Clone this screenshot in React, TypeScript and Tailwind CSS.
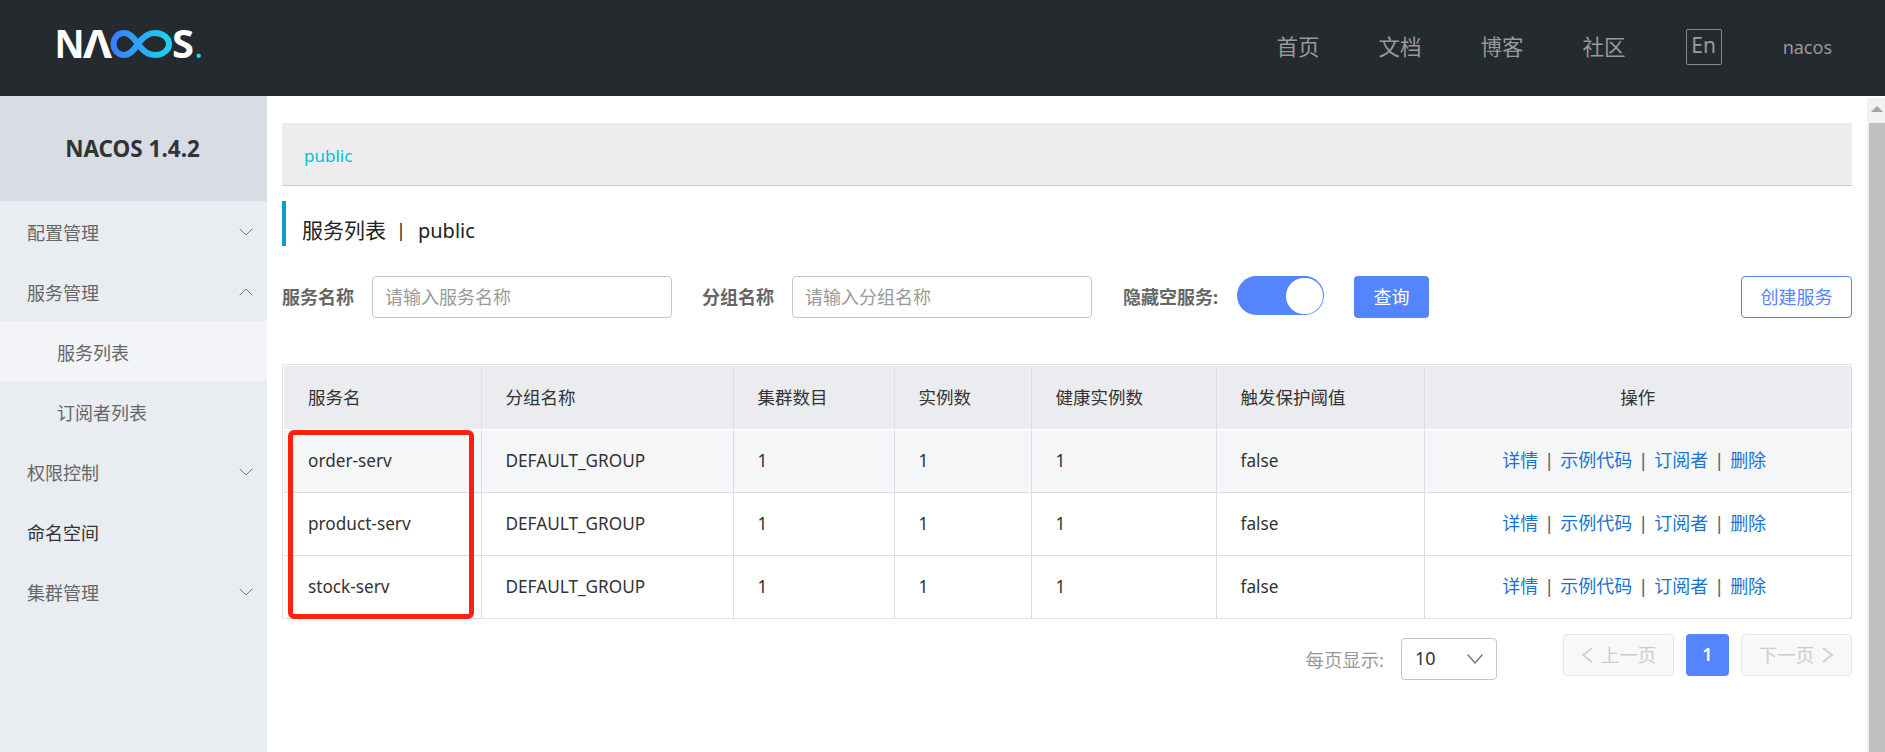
import { ChevronDown, ChevronUp } from "lucide-react";

const menu = [
  { label: "配置管理", icon: "down" },
  { label: "服务管理", icon: "up" },
  { label: "服务列表", sub: true, active: true },
  { label: "订阅者列表", sub: true },
  { label: "权限控制", icon: "down" },
  { label: "命名空间", dark: true },
  { label: "集群管理", icon: "down" },
];

const rows = [
  { name: "order-serv", hover: true },
  { name: "product-serv" },
  { name: "stock-serv" },
];

const headers = ["服务名", "分组名称", "集群数目", "实例数", "健康实例数", "触发保护阈值"];

function Logo() {
  return (
    <svg viewBox="50 10 160 68" width="160" height="68" className="mb-2 ml-[50px] flex-none">
      <defs>
        <linearGradient id="loop" gradientUnits="userSpaceOnUse" x1="111" y1="44" x2="172" y2="44">
          <stop offset="0" stopColor="#3a7cff" />
          <stop offset="1" stopColor="#1ad8f0" />
        </linearGradient>
      </defs>
      <g fill="#fff" fontFamily="'Noto Sans', sans-serif" fontWeight="700" fontSize="39">
        <text x="54.5" y="57.8" textLength="30" lengthAdjust="spacingAndGlyphs">N</text>
        <text x="83" y="57.8" textLength="29" lengthAdjust="spacingAndGlyphs">Λ</text>
        <text x="172" y="57.8" textLength="22" lengthAdjust="spacingAndGlyphs">S</text>
      </g>
      <path
        d="M138 44C134 38 130 33 124 33C118 33 113.5 38 113.5 44C113.5 50 118 55 124 55C130 55 134 50 138 44C142 38 147 33 155 33C163 33 169 38 169 44C169 50 163 55 155 55C147 55 142 50 138 44Z"
        fill="none"
        stroke="url(#loop)"
        strokeWidth="6"
      />
      <circle cx="198.7" cy="55.7" r="2.2" fill="#1ad8f0" />
    </svg>
  );
}

function PageArrow({ dir }: { dir: "left" | "right" }) {
  return (
    <svg viewBox="0 0 12 16" className="h-4 w-3 flex-none" fill="none" stroke="#cfcfcf" strokeWidth="1.8">
      <polyline points={dir === "left" ? "11,1 2,8 11,15" : "1,1 10,8 1,15"} />
    </svg>
  );
}

export default function App() {
  return (
    <div className="flex h-[752px] flex-col overflow-hidden bg-white font-['Noto_Sans','Noto_Sans_CJK_SC',sans-serif] text-[18px]">
      <header className="flex h-24 flex-none items-center bg-[#252a2f] text-[#999]">
        <Logo />
        <nav className="ml-auto flex items-center gap-[59px] pb-[2px] text-[21.5px]">
          <a>首页</a>
          <a>文档</a>
          <a>博客</a>
          <a>社区</a>
        </nav>
        <span className="mb-[2px] ml-[60px] flex h-[36px] w-[36px] items-center justify-center rounded-[2px] border border-[#8a8a8a] pb-[3px] text-[21px]">
          En
        </span>
        <span className="mr-[53px] ml-[61px] pb-0.5 text-[18px]">nacos</span>
      </header>

      <div className="flex min-h-0 flex-1">
        <aside className="w-[267px] flex-none bg-[#e9ecf1]">
          <div className="flex h-[105px] items-center justify-center bg-[#d8dce4] pr-0.5 text-[22.5px] font-bold text-[#333]">
            NACOS 1.4.2
          </div>
          {menu.map((item) => (
            <div
              key={item.label}
              className={`flex h-[60px] items-center pt-1 pr-[9px] text-[18px] ${item.sub ? "pl-[57px]" : "pl-[27px]"} ${
                item.active ? "bg-[#f2f4f8]" : ""
              } ${item.dark ? "text-[#333]" : "text-[#666]"}`}
            >
              <span>{item.label}</span>
              {item.icon === "down" && <ChevronDown size={24} strokeWidth={1} className="mb-0.5 ml-auto text-[#777]" />}
              {item.icon === "up" && <ChevronUp size={24} strokeWidth={1} className="mb-0.5 ml-auto text-[#777]" />}
            </div>
          ))}
        </aside>

        <main className="min-w-0 flex-1 px-[15px] pt-[27px]">
          <div className="flex h-[63px] items-center border-b border-[#ccc] bg-[#ededed] pt-1 pl-[22px] text-[17px] text-[#00c1de]">
            public
          </div>

          <h1 className="mt-[15px] flex h-[45px] items-center border-l-4 border-[#0f9bcb] pt-[14px] pl-4 text-[20px] text-[#222]">
            <span className="text-[21px]">服务列表</span>
            <span className="mr-[12px] ml-[10px] text-[18px]">|</span>public
          </h1>

          <div className="mt-[30px] flex h-[42px] items-center text-[18px]">
            <label className="w-[72px] font-bold text-[#666]">服务名称</label>
            <input
              placeholder="请输入服务名称"
              className="ml-[18px] h-[42px] w-[300px] rounded border border-[#c4c6cf] px-3 text-[18px] outline-none placeholder:text-[#999]"
            />
            <label className="ml-[30px] w-[72px] font-bold text-[#666]">分组名称</label>
            <input
              placeholder="请输入分组名称"
              className="ml-[18px] h-[42px] w-[300px] rounded border border-[#c4c6cf] px-3 text-[18px] outline-none placeholder:text-[#999]"
            />
            <label className="ml-[31px] w-[96px] font-bold whitespace-nowrap text-[#666]">隐藏空服务:</label>
            <div className="mb-[3px] ml-[18px] flex h-[39px] w-[87px] items-center justify-end rounded-full bg-[#5584ff] pr-px">
              <div className="h-[36px] w-[37px] rounded-full bg-white" />
            </div>
            <button className="ml-[30px] h-[42px] w-[75px] rounded bg-[#5584ff] text-white">查询</button>
            <button className="ml-auto h-[42px] w-[111px] rounded border border-[#5584ff] text-[#5584ff]">创建服务</button>
          </div>

          <div className="relative mt-[46px] border-t border-l border-[#e3e4e9] pt-px pl-px">
            <table className="w-full table-fixed border-collapse text-[17.5px] text-[#333]">
              <colgroup>
                <col className="w-[197px]" />
                <col className="w-[252px]" />
                <col className="w-[161px]" />
                <col className="w-[137px]" />
                <col className="w-[185px]" />
                <col className="w-[208px]" />
                <col />
              </colgroup>
              <thead>
                <tr className="h-[63px] bg-[#ebecf0]">
                  {headers.map((h) => (
                    <th key={h} className="border-r border-b border-r-[#dcdee3] border-b-white pl-6 text-left font-normal">
                      {h}
                    </th>
                  ))}
                  <th className="border-r border-b border-r-[#dcdee3] border-b-white text-center font-normal">操作</th>
                </tr>
              </thead>
              <tbody>
                {rows.map((r) => (
                  <tr key={r.name} className={`h-[63px] ${r.hover ? "bg-[#f5f6f8]" : "bg-white"}`}>
                    {[r.name, "DEFAULT_GROUP", "1", "1", "1", "false"].map((v, i) => (
                      <td key={i} className="border-r border-b border-[#dcdee3] pl-6 text-[17.2px]">
                        {v}
                      </td>
                    ))}
                    <td className="border-r border-b border-[#dcdee3] pr-[7px] text-center text-[18px] text-[#666]">
                      <a className="text-[#1a73d2]">详情</a>
                      <span className="mx-[6px] font-medium">|</span>
                      <a className="text-[#1a73d2]">示例代码</a>
                      <span className="mx-[6px] font-medium">|</span>
                      <a className="text-[#1a73d2]">订阅者</a>
                      <span className="mx-[6px] font-medium">|</span>
                      <a className="text-[#1a73d2]">删除</a>
                    </td>
                  </tr>
                ))}
              </tbody>
            </table>
            <div className="pointer-events-none absolute top-[65px] left-[5px] h-[189px] w-[186px] rounded-md border-[5px] border-[#ff2010]" />
          </div>

          <div className="mt-[15px] flex items-start justify-end">
            <span className="mt-3 text-[18.4px] whitespace-nowrap text-[#999]">每页显示:</span>
            <div className="mt-1 ml-[17px] flex h-[42px] w-[96px] items-center justify-between rounded border border-[#c4c6cf] pr-[13px] pl-[13px] text-[#333]">
              <span>10</span>
              <svg viewBox="0 0 16 10" className="h-2.5 w-4" fill="none" stroke="#777" strokeWidth="1.4">
                <polyline points="0.5,0.5 8,9 15.5,0.5" />
              </svg>
            </div>
            <div className="ml-[66px] flex h-[42px] w-[111px] items-center justify-center gap-[8px] rounded border border-[#e6e7eb] bg-[#f7f8fa] text-[18.5px] text-[#ccc]">
              <PageArrow dir="left" />
              <span>上一页</span>
            </div>
            <div className="ml-3 flex h-[42px] w-[43px] items-center justify-center rounded bg-[#5584ff] font-semibold text-white">
              1
            </div>
            <div className="ml-3 flex h-[42px] w-[111px] items-center justify-center gap-[8px] rounded border border-[#e6e7eb] bg-[#f7f8fa] text-[18.5px] text-[#ccc]">
              <span>下一页</span>
              <PageArrow dir="right" />
            </div>
          </div>
        </main>

        <div className="mt-0.5 flex w-[18px] flex-none flex-col bg-[#f1f1f1] pl-0.5">
          <div className="flex h-[25px] flex-none items-center justify-center">
            <div className="mb-1 h-0 w-0 border-r-[6px] border-b-[6px] border-l-[6px] border-r-transparent border-b-[#a3a3a3] border-l-transparent" />
          </div>
          <div className="flex-1 bg-[#c1c1c1]" />
        </div>
      </div>
    </div>
  );
}
